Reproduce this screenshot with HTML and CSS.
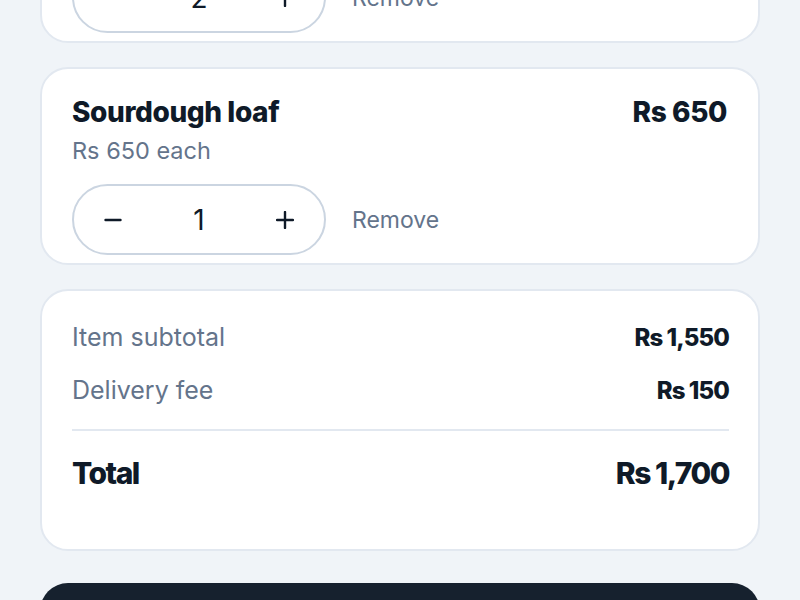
FILE: index.html
```html
<!DOCTYPE html>
<html>
<head>
  <title>Your cart</title>
  <link rel="stylesheet" href="styles.css">
</head>
<body>
  <div class="cart">
    <div class="item-card">
      <div class="item-top">
        <span class="item-name">Butter croissant</span>
        <span class="item-price">Rs 900</span>
      </div>
      <div class="item-each">Rs 450 each</div>
      <div class="item-actions">
        <div class="stepper">
          <button class="step-btn" aria-label="Decrease">
            <svg width="18" height="18" viewBox="0 0 18 18"><path d="M1.5 9h15" stroke="currentColor" stroke-width="2.4" stroke-linecap="round"/></svg>
          </button>
          <span class="qty">2</span>
          <button class="step-btn" aria-label="Increase">
            <svg width="18" height="18" viewBox="0 0 18 18"><path d="M1 9h16M9 1v16" stroke="currentColor" stroke-width="2.4" stroke-linecap="round"/></svg>
          </button>
        </div>
        <button class="remove-btn">Remove</button>
      </div>
    </div>

    <div class="item-card">
      <div class="item-top">
        <span class="item-name">Sourdough loaf</span>
        <span class="item-price">Rs 650</span>
      </div>
      <div class="item-each">Rs 650 each</div>
      <div class="item-actions">
        <div class="stepper">
          <button class="step-btn" aria-label="Decrease">
            <svg width="18" height="18" viewBox="0 0 18 18"><path d="M1.5 9h15" stroke="currentColor" stroke-width="2.4" stroke-linecap="round"/></svg>
          </button>
          <span class="qty">1</span>
          <button class="step-btn" aria-label="Increase">
            <svg width="18" height="18" viewBox="0 0 18 18"><path d="M1 9h16M9 1v16" stroke="currentColor" stroke-width="2.4" stroke-linecap="round"/></svg>
          </button>
        </div>
        <button class="remove-btn">Remove</button>
      </div>
    </div>

    <div class="summary-card">
      <div class="summary-row">
        <span class="summary-label">Item subtotal</span>
        <span class="summary-value">Rs 1,550</span>
      </div>
      <div class="summary-row">
        <span class="summary-label">Delivery fee</span>
        <span class="summary-value">Rs 150</span>
      </div>
      <hr class="summary-divider">
      <div class="summary-row total-row">
        <span>Total</span>
        <span>Rs 1,700</span>
      </div>
    </div>

    <button class="checkout-btn">Place order</button>
  </div>
</body>
</html>
```

FILE: styles.css
```css
body {
  margin: 0;
  background-color: #f0f4f8;
  font-family: Inter, "Noto Sans", sans-serif;
  color: #0f1a28;
}
.cart {
  display: flex;
  flex-direction: column;
  gap: 24px;
  padding: 0 40px 40px;
  margin-top: -155px;
}
.item-card,
.summary-card {
  background-color: #fff;
  border: 2px solid #e2e8f0;
  border-radius: 28px;
}
.item-card {
  padding: 26px 31px 8px 30px;
}
.item-top {
  display: flex;
  justify-content: space-between;
  align-items: baseline;
}
.item-name,
.item-price {
  font-size: 28px;
  line-height: 34px;
  font-weight: 800;
  letter-spacing: -0.4px;
}
.item-each {
  margin-top: 7px;
  font-size: 23.5px;
  line-height: 30px;
  color: #64748b;
}
.item-actions {
  display: flex;
  align-items: center;
  margin-top: 18px;
}
.stepper {
  display: flex;
  align-items: center;
  justify-content: space-between;
  box-sizing: border-box;
  width: 254px;
  height: 71px;
  padding: 0 23px;
  border: 2px solid #cbd5e1;
  border-radius: 999px;
}
.step-btn {
  display: flex;
  align-items: center;
  justify-content: center;
  width: 32px;
  height: 32px;
  padding: 0;
  border: none;
  background: transparent;
  color: #0f1a28;
  cursor: pointer;
}
.qty {
  font-size: 28px;
}
.remove-btn {
  margin-left: 26px;
  padding: 0;
  border: none;
  background: transparent;
  font-family: inherit;
  font-size: 23px;
  color: #64748b;
  cursor: pointer;
}
.summary-card {
  padding: 20px 29px 55px 30px;
}
.summary-row {
  display: flex;
  justify-content: space-between;
  align-items: baseline;
  line-height: 53px;
}
.summary-label {
  font-size: 25px;
  color: #64748b;
}
.summary-value {
  font-size: 24px;
  font-weight: 800;
  letter-spacing: -0.9px;
}
.summary-divider {
  margin: 12px 0 21px;
  border: none;
  border-top: 2px solid #e2e8f0;
}
.total-row {
  line-height: 42px;
  font-size: 30px;
  font-weight: 800;
  letter-spacing: -1.5px;
}
.checkout-btn {
  margin-top: 8px;
  height: 76px;
  border: none;
  border-radius: 28px;
  background-color: #16212e;
  color: #fff;
  font-family: inherit;
  font-size: 26px;
  font-weight: 700;
}
```
